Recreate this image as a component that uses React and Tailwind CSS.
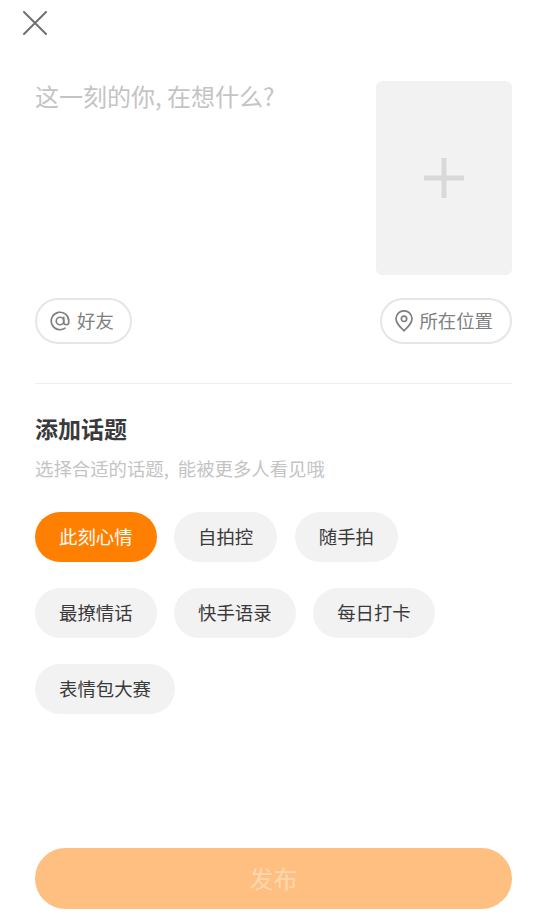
const cjk = "font-['Noto_Sans_CJK_SC','Noto_Sans',sans-serif]";

function Chip({ children, active }) {
  return (
    <div className={`h-[50px] px-6 pb-[2px] rounded-full flex items-center text-[18.4px] leading-none ${active ? "bg-[#ff8000] text-white" : "bg-[#f2f2f2] text-[#3a3a3a]"}`}>
      {children}
    </div>
  );
}

function Pill({ icon, label, spacing }) {
  return (
    <div className={`h-[46px] rounded-full border-2 border-[#e6e6e6] flex items-center text-[18.4px] leading-none text-[#808080] pl-[13px] ${spacing}`}>
      {icon}
      <span className="pb-[2px]">{label}</span>
    </div>
  );
}

export default function App() {
  return (
    <div className={`${cjk} w-[539px] h-[918px] bg-white flex flex-col overflow-hidden`}>
      <div className="h-[81px] pl-[23px] pt-[11px] shrink-0">
        <svg width="24" height="24" viewBox="0 0 24 24" fill="none" stroke="#707070" strokeWidth="2" strokeLinecap="round">
          <path d="M1 1 L23 23 M23 1 L1 23" />
        </svg>
      </div>

      <div className="flex justify-between pl-[35px] pr-[27px] shrink-0">
        <div className="text-[24px] leading-[30px] text-[#c4c4c4] whitespace-nowrap">
          这一刻的你<span className="inline-block w-[12px]">,</span>在想什么?
        </div>
        <div className="w-[136px] h-[194px] rounded-[6px] bg-[#f2f2f2] flex items-center justify-center">
          <svg width="40" height="40" viewBox="0 0 40 40" fill="#d9d9d9">
            <rect x="0" y="17.5" width="40" height="5" />
            <rect x="17.5" y="0" width="5" height="40" />
          </svg>
        </div>
      </div>

      <div className="flex justify-between pl-[35px] pr-[27px] mt-[23px] shrink-0">
        <Pill
          spacing="gap-[7px] pr-[16px]"
          label="好友"
          icon={
            <svg width="20" height="20" viewBox="0 0 24 24" fill="none" stroke="#808080" strokeWidth="2" strokeLinecap="round">
              <circle cx="12" cy="12" r="4.500" />
              <path d="M16.500 7.500v6a3 3 0 0 0 6 0V12a10.500 10.500 0 1 0-4.500 8.600" />
            </svg>
          }
        />
        <Pill
          spacing="gap-[6px] pr-[17px]"
          label="所在位置"
          icon={
            <svg width="18" height="22" viewBox="0 0 18 22" fill="none" stroke="#808080" strokeWidth="1.700" strokeLinejoin="round">
              <path d="M9 20.800C4.500 16.500 1 13.200 1 8.800a8 8 0 0 1 16 0c0 4.400-3.500 7.700-8 12Z" />
              <circle cx="9" cy="8.800" r="2.700" />
            </svg>
          }
        />
      </div>

      <div className="mt-[39px] ml-[35px] mr-[27px] h-px bg-[#eeeeee] shrink-0" />

      <div className="pl-[35px] pr-[27px] mt-[28px] flex-1 flex flex-col">
        <div className="text-[23px] leading-[32px] font-bold text-[#3a3a3a]">添加话题</div>
        <div className="mt-[11px] text-[18.4px] leading-[26px] text-[#c4c4c4] whitespace-nowrap">
          选择合适的话题<span className="inline-block w-[14px]">,</span>能被更多人看见哦
        </div>

        <div className="mt-[31px] flex flex-col gap-[26px]">
          <div className="flex gap-[17.500px]">
            <Chip active>此刻心情</Chip>
            <Chip>自拍控</Chip>
            <Chip>随手拍</Chip>
          </div>
          <div className="flex gap-[17.500px]">
            <Chip>最撩情话</Chip>
            <Chip>快手语录</Chip>
            <Chip>每日打卡</Chip>
          </div>
          <div className="flex gap-[17.500px]">
            <Chip>表情包大赛</Chip>
          </div>
        </div>

        <div className="mt-auto mb-[9px] h-[61px] pb-[2px] rounded-full bg-[#ffbf80] flex items-center justify-center text-[24px] text-white/40">
          发布
        </div>
      </div>
    </div>
  );
}
